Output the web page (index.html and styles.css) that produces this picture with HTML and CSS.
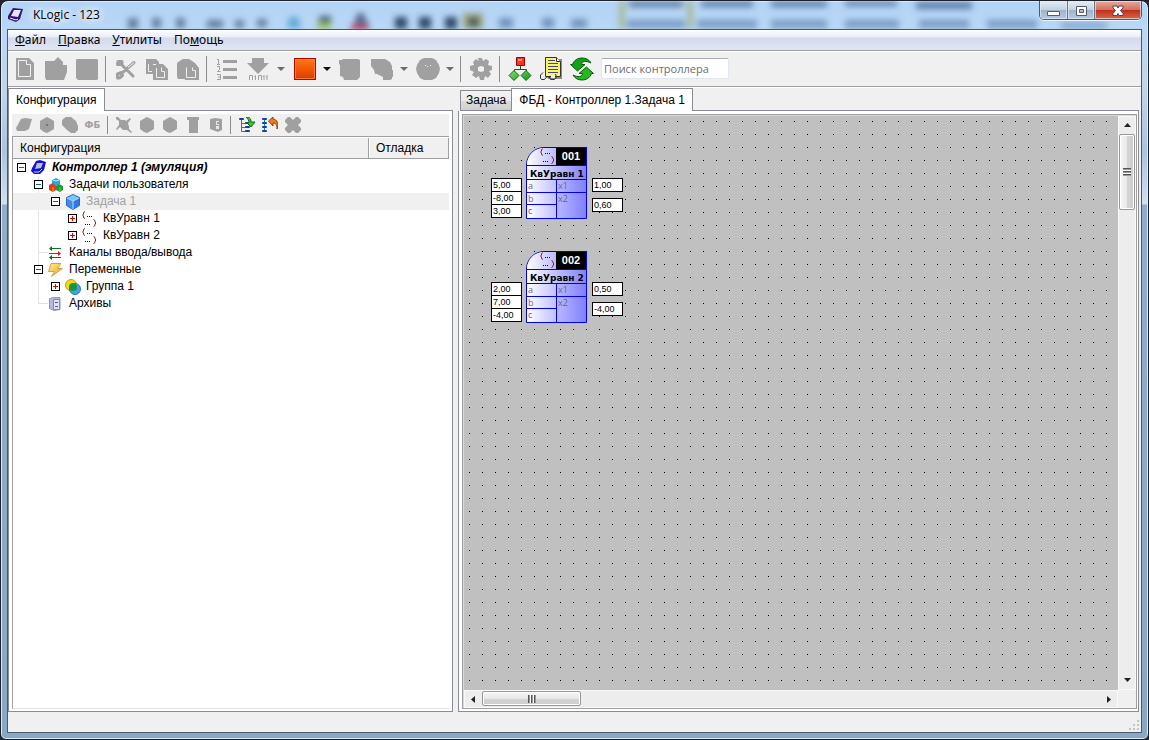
FILE: index.html
```html
<!DOCTYPE html>
<html lang="ru">
<head>
<meta charset="utf-8">
<title>KLogic - 123</title>
<link rel="stylesheet" href="styles.css">
</head>
<body>
<svg class="defs" aria-hidden="true">
  <defs>
    <linearGradient id="g-red" x1="0" y1="0" x2="0" y2="1"><stop offset="0" stop-color="#ff7a10"/><stop offset="1" stop-color="#e03800"/></linearGradient>
    <linearGradient id="g-green" x1="0" y1="0" x2="1" y2="1"><stop offset="0" stop-color="#8be070"/><stop offset="1" stop-color="#109010"/></linearGradient>
    <linearGradient id="g-gold" x1="0" y1="0" x2="1" y2="1"><stop offset="0" stop-color="#fff090"/><stop offset="1" stop-color="#e8a020"/></linearGradient>
    <filter id="soft" x="-5%" y="-50%" width="110%" height="200%"><feGaussianBlur stdDeviation="3"/></filter>
    <symbol id="hexa" viewBox="0 0 16 16"><path d="M8 0 10 1 15 4V12L10 15 8 16 5 15 1 12V4L6 1Z"/></symbol>
    <symbol id="fb" viewBox="0 0 16 16"><path d="M3 .500 1.500 1.500V3L.500 4l1 1v1.500L3 7.500M11.500 8.500l1.500 1v1.500l1 1-1 1v1.500l-1.500 1" fill="none" stroke="#981818"/><path d="M5 5h1v1H5zM7 5h1v1H7zM9 5h1v1H9zM3 13h1v1H3zM5 13h1v1H5zM7 13h1v1H7z" fill="#111"/></symbol>
  </defs>
</svg>
<div class="window">
  <header class="titlebar">
    <svg class="glass" width="1149" height="28" aria-hidden="true">
      <g filter="url(#soft)">
        <g fill="#47617f" opacity=".75"><rect x="127" y="17" width="10" height="11"/><rect x="151" y="17" width="9" height="10"/><rect x="175" y="17" width="9" height="10"/><rect x="206" y="19" width="16" height="8"/><rect x="234" y="19" width="9" height="8"/><rect x="256" y="18" width="10" height="8"/></g>
        <path d="M288 16h9l3 11h-14Z" fill="#60a8d8"/><rect x="318" y="15" width="12" height="7" fill="#486a72"/><rect x="316" y="22" width="14" height="6" fill="#9ac060"/>
        <path d="M357 12h5l7 15h-18Z" fill="#53688f"/><rect x="350" y="24" width="17" height="5" fill="#c03858"/>
        <g fill="#2e4867"><rect x="394" y="16" width="12" height="12"/><rect x="418" y="16" width="12" height="12"/><rect x="444" y="16" width="12" height="12"/></g><rect x="462" y="12" width="20" height="16" fill="#9ca884"/><rect x="467" y="16" width="11" height="10" fill="#4b5b58"/>
        <g fill="#7193bd"><rect x="498" y="17" width="14" height="10"/><rect x="541" y="17" width="12" height="10"/><rect x="570" y="18" width="16" height="9"/></g>
        <g fill="#a4ba9b"><rect x="618" y="0" width="6" height="28"/><rect x="686" y="0" width="6" height="28"/><rect x="624" y="2" width="64" height="1"/></g>
        <g fill="#486794" opacity=".8"><rect x="628" y="0" width="54" height="6"/><rect x="700" y="0" width="52" height="6"/><rect x="770" y="0" width="56" height="6"/><rect x="844" y="0" width="52" height="5"/><rect x="915" y="1" width="56" height="7"/></g>
        <g fill="#688db8" opacity=".8"><rect x="626" y="19" width="58" height="8"/><rect x="696" y="19" width="60" height="8"/><rect x="770" y="19" width="56" height="8"/><rect x="844" y="19" width="54" height="8"/><rect x="918" y="19" width="50" height="8"/><rect x="986" y="19" width="50" height="8"/><rect x="1060" y="22" width="46" height="5"/></g>
      </g>
    </svg>
    <svg class="app-icon" viewBox="0 0 16 16" width="16" height="16" aria-hidden="true"><path d="M5 1 15 2 12 12 8 15 0 12V9Z" fill="#31137c"/><path d="M6 3 13 3 10 10 3 9Z" fill="#e6e3ec"/><path d="M2 11 8 13 10 12" fill="none" stroke="#eee"/></svg>
    <h1 class="title">KLogic - 123</h1>
    <div class="win-buttons">
      <button class="win-btn min" aria-label="Свернуть"><svg width="13" height="13" aria-hidden="true"><path d="M.500 7.500h12v4H.500Z" fill="#fff" stroke="#565b6b"/></svg></button>
      <button class="win-btn max" aria-label="Развернуть"><svg width="13" height="13" aria-hidden="true"><path d="M1.500 2.500h10v9h-10Z" fill="#fff" stroke="#565b6b"/><path d="M4.500 5.500h4v3h-4Z" fill="#a8bdd0" stroke="#565b6b"/></svg></button>
      <button class="win-btn close" aria-label="Закрыть"><svg width="14" height="13" aria-hidden="true"><path d="M2 2h4l1 2 1-2h4v2L9.500 6.500 12 9.500v2H8L7 9.500 6 11.500H2v-2L4.500 6.500 2 4Z" fill="#fff" stroke="#5a4250"/></svg></button>
    </div>
  </header>

  <div class="client">
    <nav class="menubar">
      <a href="#"><u>Ф</u>айл</a><a href="#"><u>П</u>равка</a><a href="#"><u>У</u>тилиты</a><a href="#">По<u>м</u>ощь</a>
    </nav>

    <div class="toolbar">
      <button class="tool" aria-label="Создать"><svg viewBox="0 0 24 24"><path d="M3 1h13l5 5v17H3Z"/><path d="M5.500 3.500h8v4h4v12h-12Z" fill="none" stroke="#f0f0f0"/></svg></button>
      <button class="tool" aria-label="Открыть"><svg viewBox="0 0 24 24"><path d="M1 4h9l4-4 5 5v3h4v7l-3 8H2L1 20Z"/></svg></button>
      <button class="tool" aria-label="Сохранить"><svg viewBox="0 0 24 24"><path d="M2 2h20l1 1v19l-1 1H3l-2-2V3Z"/></svg></button>
      <i class="sep"></i>
      <button class="tool" aria-label="Вырезать"><svg viewBox="0 0 24 24"><path d="M4 4.500h4v3H3.500ZM7 7l12 12M8 16 20 5.500M3.500 17l4-1.500 1 3-3 2.500h-2Z" fill="none" stroke="#a0a0a0" stroke-width="3" stroke-linejoin="round" stroke-linecap="round"/><path d="M14 10.500 20 5.500" stroke="#f0f0f0"/></svg></button>
      <button class="tool" aria-label="Копировать"><svg viewBox="0 0 24 24"><path d="M1 2h10l3 3v12H1Z"/><path d="M8 7h10l5 5v11H8Z"/><path d="M3.500 7v7.500H7M8 7.500h3M11.500 11v9.500h8v-6h-3v-4" fill="none" stroke="#f0f0f0"/></svg></button>
      <button class="tool" aria-label="Вставить"><svg viewBox="0 0 24 24"><path d="M2 5 7 2h6l6 4 4 5v12H9v-1H2L1 20V6Z"/><path d="M10.500 10.500v10h9v-7h-3v-3" fill="none" stroke="#f0f0f0"/></svg></button>
      <i class="sep"></i>
      <button class="tool" aria-label="Порядок"><svg viewBox="0 0 24 24"><path d="M8 3h14v3H8zM8 11h14v3H8zM8 19h14v3H8z"/><path d="M2 2.500h1.500V7M2 7.500h3M2 9.500h2.500v3l-2 2h3M2 17.500h3.500v5H2M3 20h2" fill="none" stroke="#a0a0a0"/></svg></button>
      <button class="tool" aria-label="Загрузить"><svg viewBox="0 0 24 24"><path d="M6 1h12v5h5L12 17 1 6h5Z"/><path d="M3.500 23v-4.500h3V23M8.500 20l1-1.500V23M12.500 23v-4.500h3V23M17 20l1-1.500V23M20 20l1-1.500V23" fill="none" stroke="#a0a0a0"/></svg></button>
      <button class="caret" aria-label="Параметры загрузки"><svg viewBox="0 0 8 4"><path d="M0 0h8L4 4Z"/></svg></button>
      <button class="tool stop" aria-label="Стоп"><svg viewBox="0 0 24 24"><rect x="1.500" y="1.500" width="21" height="21" fill="url(#g-red)" stroke="#a80800"/><path d="M2.500 2.500h19v19h-19Z" fill="none" stroke="#ff7b32"/></svg></button>
      <button class="caret dark" aria-label="Параметры остановки"><svg viewBox="0 0 8 4"><path d="M0 0h8L4 4Z"/></svg></button>
      <button class="tool" aria-label="Отладка"><svg viewBox="0 0 24 24"><path d="M1 3h3l1-1h15l2 1v17l-3 3H6l-1-3-3-1V8L1 7Z"/></svg></button>
      <button class="tool stop" aria-label="Слои"><svg viewBox="0 0 24 24"><path d="M1 2h14l5 3 2 4v4h1v7h-1v2l-2 1h-7v-3l-6-3H5l-1-4-3-4Z"/></svg></button>
      <button class="caret" aria-label="Выбор слоя"><svg viewBox="0 0 8 4"><path d="M0 0h8L4 4Z"/></svg></button>
      <button class="tool stop" aria-label="Связь"><svg viewBox="0 0 24 24"><path d="M8 1h8l4 2 3 5 1 4-1 4-3 5-4 2H8l-4-2-3-5-1-4 1-4 3-5Z"/><path d="M9 8h1v1H9zM11 9h1v1h-1zM14 8h1v1h-1z" fill="#eee"/></svg></button>
      <button class="caret" aria-label="Параметры связи"><svg viewBox="0 0 8 4"><path d="M0 0h8L4 4Z"/></svg></button>
      <i class="sep"></i>
      <button class="tool" aria-label="Настройки"><svg viewBox="0 0 24 24"><path fill-rule="evenodd" d="M9 1h4l1 3 3-2 3 2-1 4 4 1v4l-3 1 2 3-3 4-3-2-1 4h-4l-1-4-3 2-4-3 2-3-4-2V9l4-1-1-3 3-3 3 2ZM12 9 9 10v4l3 1 3-1v-4Z"/></svg></button>
      <i class="sep"></i>
      <button class="tool" aria-label="Структура"><svg viewBox="0 0 24 24"><path d="M12.500 9v4M6.500 16v-3.500h12V16" fill="none" stroke="#0a6020"/><path d="M8.500.500h8v8h-8Z" fill="#f33820" stroke="#a00000"/><path d="M10 2h4v2h-4Z" fill="#ff947a"/><path d="M6 13.500 11 18.500 6 23.500 1 18.500ZM18 13.500 23 18.500 18 23.500 13 18.500Z" fill="url(#g-green)" stroke="#087010"/></svg></button>
      <button class="tool" aria-label="Просмотр"><svg viewBox="0 0 24 24"><path d="M9 2h14v20H9Z" fill="#8c8c8c"/><path d="M6.500.500h11l4 4v15h-15Z" fill="#f8f468" stroke="#333"/><path d="M17.500.500v4h4" fill="#fff" stroke="#333"/><path d="M9 3.500h7M9 6.500h10M9 9.500h10M9 12.500h10M9 15.500h10" stroke="#444480"/><path d="M4 15.500 1.500 18v3l1 1.500h3l2-2.500h3l1 2.500h4l2-2.500-1-3" fill="none" stroke="#333"/><path d="M3 18h3v3H3zM12 18h4v3h-4z" fill="#eee"/></svg></button>
      <button class="tool" aria-label="Обновить"><svg viewBox="0 0 24 24"><path d="M.500 7.500h2C4 3 8 1 12 1c4 0 7 1.500 9 5-5-2.500-9-2-9.500 1.500h3.500L7.500 14Z" fill="#16a016" stroke="#075c0c"/><path d="M23.500 16.500h-2C20 21 16 23 12 23c-4 0-7-1.500-9-5 5 2.500 9 2 9.500-1.500H9L16.500 10Z" fill="#26b81e" stroke="#075c0c"/></svg></button>
      <input class="search" type="text" placeholder="Поиск контроллера" aria-label="Поиск контроллера">
    </div>

    <main class="workspace">
      <section class="pane config">
        <div class="tabs"><button class="tab active">Конфигурация</button><span class="tab-rest"></span></div>
        <div class="page">
          <div class="minibar">
            <button class="mini" aria-label="Контроллер"><svg viewBox="0 0 16 16"><path d="M5 2 9 1 16 2 13 12 9 14 1 14 0 11Z"/></svg></button>
            <button class="mini" aria-label="Задача"><svg viewBox="0 0 16 16"><use href="#hexa"/><path d="M7 7h2v2H7z" fill="#777"/></svg></button>
            <button class="mini" aria-label="Группа"><svg viewBox="0 0 16 16"><path d="M1 2 4 0h5l5 4 2 5v4l-3 3H9l-4-3-5-5V4Z"/></svg></button>
            <button class="mini fbtext">ФБ</button>
            <i class="sep"></i>
            <button class="mini" aria-label="Отключить"><svg viewBox="0 0 16 16"><path d="M0 0h2l3 3h4l1 1 4-3 1 1-3 4 1 4v2l3 3-1 1-4-3H7L4 10 1 13 0 12 3 8V4L0 2Z"/></svg></button>
            <button class="mini" aria-label="Блок"><svg viewBox="0 0 16 16"><use href="#hexa"/></svg></button>
            <button class="mini" aria-label="Модуль"><svg viewBox="0 0 16 16"><use href="#hexa"/></svg></button>
            <button class="mini" aria-label="Удалить"><svg viewBox="0 0 16 16"><path d="M2 0h12v3h-1v13H4V3H2Z"/></svg></button>
            <button class="mini" aria-label="Архив"><svg viewBox="0 0 16 16"><path d="M2 2 7 1l7 1v11l-4 2-8-3Z"/><path d="M8 4h3v1H9v2h2v1H8zM8 9h3v3H8z" fill="#e8e8e8"/></svg></button>
            <i class="sep"></i>
            <button class="mini" aria-label="Развернуть дерево"><svg viewBox="0 0 16 16"><path d="M2.500 3v11.500H8M2 6.500h5M2 10.500h5" fill="none" stroke="#1878d0"/><path d="M.500 1.500h4v1h-4zM6.500 5.500h4v1h-4zM6.500 9.500h4v1h-4zM6.500 13.500h4v1h-4z" fill="#58b0ff" stroke="#174098"/><path d="M7 0c4 0 5 2 5 5h4l-4 5-4-4h2c0-3-1-4-3-6Z" fill="#44c030" stroke="#126c10"/></svg></button>
            <button class="mini" aria-label="Свернуть дерево"><svg viewBox="0 0 16 16"><path d="M2.500 2v12" stroke="#1878d0"/><path d="M.500 1.500h4v1h-4zM.500 5.500h4v1h-4zM.500 9.500h4v1h-4zM.500 13.500h4v1h-4z" fill="#58b0ff" stroke="#174098"/><path d="M6.500 4 11 0v2c4 0 6 5 4 10 0-4-1-6-4-6v3Z" fill="#f07820" stroke="#984008"/></svg></button>
            <button class="mini" aria-label="Очистить"><svg viewBox="0 0 16 16"><path d="M3 0h2l3 3 3-3h2l3 3v2l-3 3 3 3v2l-3 3h-2l-3-3-3 3H3l-3-3v-2l3-3-3-3V3Z"/></svg></button>
          </div>
          <div class="tree-box">
            <div class="tree-head"><span class="col-name">Конфигурация</span><span class="col-debug">Отладка</span></div>
            <ul class="tree">
              <li><div class="row root"><button class="exp" aria-label="Свернуть"></button><svg viewBox="0 0 16 16"><path d="M5 1 9 0 15 2 13 10 9 14 3 14 0 11 1 8Z" fill="#1010e0"/><path d="M6 3 12 3 10 8 4 9Z" fill="#c0c0cc"/><path d="M3 12 8 12 11 9" fill="none" stroke="#b8d8ff"/></svg><span>Контроллер 1 (эмуляция)</span></div>
                <ul>
                  <li><div class="row"><button class="exp" aria-label="Свернуть"></button><svg viewBox="0 0 16 16"><path d="M4 3 8 1l4 2v4L8 9 4 7Z" fill="#28a8e8"/><path d="M1 8l4-2 3 3v4l-3 2-4-2Z" fill="#e83818"/><path d="M8 9l3-2 4 2v4l-3 2-4-2Z" fill="#209838"/><path d="M5 3 8 4l3-1" fill="none" stroke="#b8e8ff"/><path d="M5 10v4" stroke="#f8a820"/><path d="M12 10v4" stroke="#70d060"/></svg><span>Задачи пользователя</span></div>
                    <ul>
                      <li><div class="row selected"><button class="exp" aria-label="Свернуть"></button><svg viewBox="0 0 16 16"><path d="M8 .500 14.500 3.500v8L8 15.500 1.500 11.500v-8Z" fill="#3b8cf0" stroke="#2868c8"/><path d="M8 1 14 4 8 7 2 4Z" fill="#79c6ff"/><path d="M8 7v8l6-4V4Z" fill="#3078dc"/><path d="M2 4 8 7l6-3M8 7v8" stroke="#acdcff" fill="none"/></svg><span>Задача 1</span></div>
                        <ul>
                          <li><div class="row"><button class="exp plus" aria-label="Развернуть"></button><svg viewBox="0 0 16 16"><use href="#fb"/></svg><span>КвУравн 1</span></div></li>
                          <li><div class="row"><button class="exp plus" aria-label="Развернуть"></button><svg viewBox="0 0 16 16"><use href="#fb"/></svg><span>КвУравн 2</span></div></li>
                        </ul>
                      </li>
                    </ul>
                  </li>
                  <li><div class="row"><i class="noexp"></i><svg viewBox="0 0 16 16"><path d="M2 3.500h11M2 12.500h11" stroke="#087818"/><path d="M4 1v5L1 3.500ZM4 10v5L1 12.500Z" fill="#087818"/><path d="M1 8.500h11" stroke="#e01818"/><path d="M10 6v5l3-2.500Z" fill="#e01818"/></svg><span>Каналы ввода/вывода</span></div></li>
                  <li><div class="row"><button class="exp" aria-label="Свернуть"></button><svg viewBox="0 0 16 16"><path d="M3 1.500h10L9.500 6.500h5L3.500 14.500 6.500 9.500H.500Z" fill="url(#g-gold)" stroke="#d0a058"/></svg><span>Переменные</span></div>
                    <ul>
                      <li><div class="row"><button class="exp plus" aria-label="Развернуть"></button><svg viewBox="0 0 16 16"><circle cx="6" cy="6" r="5.500" fill="#f8d810" stroke="#c89808"/><circle cx="10" cy="10" r="5.500" fill="#44a0e8" stroke="#2878c8"/><circle cx="8" cy="8" r="4" fill="#189838"/></svg><span>Группа 1</span></div></li>
                    </ul>
                  </li>
                  <li><div class="row"><i class="noexp"></i><svg viewBox="0 0 16 16"><path d="M1.500 2.500 6 1.500h6v12l-6 1-4.500-2Z" fill="#b4b8e0" stroke="#9298c4"/><path d="M5.500 3.500h6v10h-6Z" fill="#e2e4f8" stroke="#8288b8"/><path d="M7 6.500h3M7 10.500h3" stroke="#555a90"/></svg><span>Архивы</span></div></li>
                </ul>
              </li>
            </ul>
          </div>
        </div>
      </section>

      <section class="pane editor">
        <div class="tabs"><button class="tab inactive">Задача</button><button class="tab active">ФБД - Контроллер 1.Задача 1</button><span class="tab-rest"></span></div>
        <div class="page">
          <div class="canvas-frame">
            <div class="canvas">
              <div class="node first">
                <div class="values ins"><span>5,00</span><span>-8,00</span><span>3,00</span></div>
                <div class="block"><div class="block-head"><svg viewBox="0 0 16 16"><use href="#fb"/></svg><b>001</b></div><div class="block-name">КвУравн 1</div><div class="ports"><div class="inputs"><span>a</span><span>b</span><span>c</span></div><div class="outputs"><span>x1</span><span>x2</span></div></div></div>
                <div class="values outs"><span>1,00</span><span>0,60</span></div>
              </div>
              <div class="node second">
                <div class="values ins"><span>2,00</span><span>7,00</span><span>-4,00</span></div>
                <div class="block"><div class="block-head"><svg viewBox="0 0 16 16"><use href="#fb"/></svg><b>002</b></div><div class="block-name">КвУравн 2</div><div class="ports"><div class="inputs"><span>a</span><span>b</span><span>c</span></div><div class="outputs"><span>x1</span><span>x2</span></div></div></div>
                <div class="values outs"><span>0,50</span><span>-4,00</span></div>
              </div>
            </div>
            <div class="scroll vert"><button class="arrow" aria-label="Вверх"><svg width="7" height="7"><path d="M0 5 3.500 1 7 5Z"/></svg></button><div class="thumb"><i></i></div><span class="track"></span><button class="arrow" aria-label="Вниз"><svg width="7" height="7"><path d="M0 1h7L3.500 5Z"/></svg></button></div>
            <div class="scroll horz"><button class="arrow" aria-label="Влево"><svg width="7" height="7"><path d="M5 0v7L1 3.500Z"/></svg></button><div class="thumb"><i></i></div><span class="track"></span><button class="arrow" aria-label="Вправо"><svg width="7" height="7"><path d="M2 0v7L6 3.500Z"/></svg></button></div>
          </div>
        </div>
      </section>
    </main>
    <footer class="statusbar"><svg width="12" height="12" aria-hidden="true"><path d="M9 1h2v2H9zM5 5h2v2H5zM9 5h2v2H9zM1 9h2v2H1zM5 9h2v2H5zM9 9h2v2H9z" fill="#c4c4c4"/></svg></footer>
  </div>
</div>
</body>
</html>
```

FILE: styles.css
```css
* { box-sizing: border-box; }
body { margin: 0; background: #20252e; font: 12px/17px "Liberation Sans", Arial, sans-serif; color: #000; }
button { margin: 0; padding: 0; border: 0; background: none; font: inherit; color: inherit; }
ul { margin: 0; padding: 0; list-style: none; }
svg { flex: none; display: block; }
.defs { position: absolute; width: 0; height: 0; }

.window {
  display: flex; flex-direction: column; min-height: 100vh; padding: 0 6px 6px;
  border: 1px solid #1c202b; border-radius: 8px 8px 6px 6px; overflow: hidden; position: relative;
  box-shadow: inset 0 0 0 1px #dcebfa;
  background: linear-gradient(#b4d4f5 0, #b9d7f6 30px, #bfd5eb 90px, #a9c4e0 150px, #d0e0f0 203px, #8fadcd 204px, #88a8c5 100%);
}

/* Title bar */
.titlebar { display: flex; align-items: flex-start; height: 28px; }
.glass { position: absolute; left: 0; top: 0; }
.app-icon { position: relative; margin: 6px 9px 0 1px; }
.title { position: relative; margin: 0; padding-top: 5px; font: 12px/18px "Open Sans", "Noto Sans", sans-serif; text-shadow: 0 0 8px #fff, 0 0 8px #fff, 0 0 10px #fff; flex: 1; }
.win-buttons { position: relative; display: flex; height: 19px; border: 1px solid #4d5a6c; border-top: 0; border-radius: 0 0 5px 5px; overflow: hidden; box-shadow: 0 1px 0 #e8f3fd; }
.win-btn { display: flex; align-items: center; justify-content: center; background: linear-gradient(#e3edf6 0, #c3d2e2 48%, #9eb3cb 50%, #b7cbdf 100%); border-right: 1px solid #68778c; box-shadow: inset 0 0 0 1px #e4edf6aa; }
.min { width: 28px; }
.max { width: 27px; }
.close { width: 46px; border: 0; background: linear-gradient(#e9a99b 0, #d5705f 48%, #bd2e1a 50%, #d6694a 100%); }

.client { flex: 1; display: flex; flex-direction: column; border: 1px solid #4a5968; background: #f0f0f0; }

/* Menu */
.menubar { display: flex; gap: 12px; height: 22px; padding: 1px 7px 0; background: linear-gradient(#fff 0, #e9edf6 7px, #d4daec 8px, #e0e5f4 19px); border-bottom: 1px solid #fff; box-shadow: inset 0 -1px #a0a0a0; }
.menubar a { color: #000; text-decoration: none; font: 12px/18px "Noto Sans", "Open Sans", sans-serif; }

/* Main toolbar */
.toolbar { display: flex; align-items: center; height: 36px; padding: 0 1px 2px; border-bottom: 1px solid #fff; box-shadow: inset 0 -1px #a0a0a0; }
.tool { width: 31px; height: 30px; display: flex; align-items: center; justify-content: center; }
.stop { padding-left: 2px; }
.tool svg { width: 24px; height: 24px; fill: #a0a0a0; }
.caret { width: 15px; display: flex; justify-content: center; fill: #6c6c6c; }
.caret svg { width: 8px; height: 4px; }
.caret.dark { fill: #111; }
.sep { flex: none; width: 8px; height: 26px; background: linear-gradient(#8c8c8c, #8c8c8c) 3px 0 / 1px 100% no-repeat; }
.search { width: 128px; height: 21px; margin-left: 4px; padding: 0 2px; border: 1px solid #e2e6ee; border-top-color: #abadb3; border-radius: 2px; background: #fff; font: 11px/17px "Open Sans", "Noto Sans", sans-serif; }
.search::placeholder { color: #6d6d6d; opacity: 1; }

/* Panes */
.workspace { flex: 1; display: flex; gap: 5px; padding-right: 2px; }
.pane { display: flex; flex-direction: column; }
.config { width: 445px; flex: none; }
.editor { flex: 1; min-width: 0; }
.tabs { display: flex; align-items: flex-end; height: 23px; }
.tab { height: 23px; padding: 0 7px; border: 1px solid #898c95; border-bottom: 0; background: #fff; text-align: left; white-space: nowrap; }
.tab.inactive { height: 21px; padding: 0 5px; margin-left: 2px; align-self: flex-end; border-right: 0; border-bottom: 1px solid #898c95; background: linear-gradient(#f2f2f2 0, #ebebeb 50%, #dcdcdc 51%, #cfcfcf 100%); }
.tab-rest { flex: 1; border-bottom: 1px solid #898c95; }
.page { flex: 1; display: flex; flex-direction: column; padding: 3px 3px 2px; background: #fff; border: 1px solid #898c95; border-top: 0; }
.editor .page { padding-right: 1px; }

.minibar { display: flex; align-items: center; height: 22px; background: #f0f0f0; }
.mini { width: 23px; height: 22px; display: flex; align-items: center; justify-content: center; }
.mini svg { width: 16px; height: 16px; fill: #a0a0a0; }
.fbtext { color: #a0a0a0; font: bold 9px/12px "DejaVu Sans", sans-serif; }
.minibar .sep { height: 18px; }

.tree-box { flex: 1; display: flex; flex-direction: column; border: 1px solid #a0a0a0; border-right: 0; border-bottom-color: #e3e3e3; }
.tree-head { display: flex; height: 22px; line-height: 20px; background: #f0f0f0; border-bottom: 1px solid #a0a0a0; border-top: 1px solid #fff; }
.col-name { flex: 1; padding-left: 7px; border-right: 1px solid #a0a0a0; }
.col-debug { width: 80px; padding-left: 6px; border-left: 1px solid #fff; border-right: 1px solid #a0a0a0; }
.row { display: flex; align-items: center; height: 17px; padding-left: 0; white-space: nowrap; }
.tree ul .row { padding-left: 17px; }
.tree ul ul .row { padding-left: 34px; }
.tree ul ul ul .row { padding-left: 51px; }
.row svg { width: 16px; height: 16px; margin-right: 5px; }
.root { font-weight: bold; font-style: italic; }
.selected { background: #f0f0f0; color: #a0a0a0; }
.exp { width: 9px; height: 9px; margin: 0 5px 0 4px; border: 1px solid #000; background: linear-gradient(#087070, #087070) center / 5px 1px no-repeat, #fff; flex: none; }
.plus { background: linear-gradient(#e00000, #e00000) center / 5px 1px no-repeat, linear-gradient(#e00000, #e00000) center / 1px 5px no-repeat, #fff; }
.noexp { width: 18px; height: 1px; background: linear-gradient(90deg, transparent 50%, #e0e0e0 50%); flex: none; }
.tree > li > ul { background: linear-gradient(#e4e4e4, #e4e4e4) 25px 0 / 1px calc(100% - 8px) no-repeat; }

/* Diagram */
.canvas-frame { flex: 1; display: grid; grid-template: minmax(0, 1fr) 18px / minmax(0, 1fr) 18px; background: #f0f0f0; border: 1px solid #a0a0a0; box-shadow: inset 1px 1px #d8d8d8; }
.canvas { position: relative; margin: 1px 0 0 1px; background: linear-gradient(90deg, transparent 1px, #c0c0c0 1px) 5px 5px / 13px 13px, linear-gradient(transparent 1px, #c0c0c0 1px) 5px 5px / 13px 13px, #000; overflow: hidden; }
.node { position: absolute; left: 27px; display: flex; align-items: flex-start; }
.first { top: 31px; }
.second { top: 135px; }
.values { display: flex; flex-direction: column; width: 31px; margin-top: 31px; font: 9px/12px "Liberation Sans", Arial, sans-serif; }
.values span { height: 14px; border: 1px solid #000; background: #fff; padding-left: 1px; }
.ins { margin-right: 4px; }
.outs { margin-left: 5px; gap: 6px; }
.ins span + span { margin-top: -1px; }
.block { width: 61px; border: 1px solid #0000f0; border-top-left-radius: 18px; overflow: hidden; background: linear-gradient(90deg, #fff, #8080ff); }
.block-head { display: flex; height: 18px; border-bottom: 1px solid #0000f0; background: linear-gradient(90deg, #fff, #b8b8ff 30px); }
.block-head svg { width: 16px; height: 16px; margin-left: 13px; }
.block-head b { flex: 1; background: #000; color: #fff; text-align: center; font: bold 11px/17px "Liberation Sans", Arial, sans-serif; }
.block-name { height: 14px; border-bottom: 1px solid #0000f0; font: bold 9px/16px "DejaVu Sans", sans-serif; padding-left: 3px; white-space: nowrap; }
.ports { display: flex; height: 38px; color: #686878; font: 9px/11px "Open Sans", "DejaVu Sans", sans-serif; }
.inputs { width: 30px; display: flex; flex-direction: column; border-right: 1px solid #0000f0; background: linear-gradient(90deg, #fff, #c0c0ff); }
.outputs { flex: 1; background: linear-gradient(90deg, #b8b8ff, #8080ff); }
.ports span { display: block; height: 13px; padding-left: 1px; border-bottom: 1px solid #0000f0; }
.outputs span:last-child, .inputs span:last-child { border: 0; }

/* Scrollbars */
.scroll { display: flex; background: #ededed; border: 1px solid #fafafa; }
.vert { flex-direction: column; margin-top: 1px; }
.arrow { flex: none; width: 17px; height: 17px; display: flex; align-items: center; justify-content: center; fill: #222; }
.thumb { flex: none; display: flex; align-items: center; justify-content: center; border: 1px solid #979797; border-radius: 2px; box-shadow: inset 0 0 0 1px #fff; }
.vert .thumb { width: 16px; height: 76px; background: linear-gradient(90deg, #f5f5f5, #e8e8e8 50%, #d6d6d6 51%, #cbcbcf); }
.horz { margin-left: 1px; }
.horz .thumb { width: 99px; height: 15px; background: linear-gradient(#f5f5f5, #e8e8e8 50%, #d6d6d6 51%, #cbcbcf); }
.thumb i { width: 8px; height: 8px; }
.vert i { background: repeating-linear-gradient(#555 0 1px, #999 1px 2px, #fff 2px 3px); }
.horz i { background: repeating-linear-gradient(90deg, #555 0 1px, #999 1px 2px, #fff 2px 3px); }
.track { flex: 1; }

.statusbar { display: flex; align-items: flex-end; justify-content: flex-end; height: 20px; padding: 0 1px 1px; }
```
